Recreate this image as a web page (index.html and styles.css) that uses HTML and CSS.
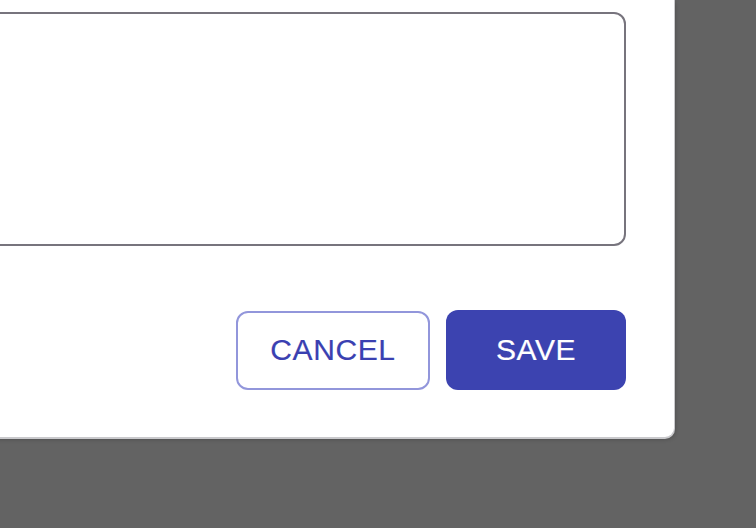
FILE: index.html
```html
<!DOCTYPE html>
<html>
<head>
<meta charset="utf-8">
<link rel="stylesheet" href="styles.css">
</head>
<body>
<div class="dialog">
  <div class="field"></div>
  <div class="actions">
    <button class="btn btn-outline">CANCEL</button>
    <button class="btn btn-filled">SAVE</button>
  </div>
</div>
</body>
</html>
```
FILE: styles.css
```css
html, body {
  margin: 0;
  padding: 0;
  background: #636363;
  width: 756px;
  height: 528px;
  overflow: hidden;
}
.dialog {
  box-sizing: border-box;
  margin-left: -100px;
  width: 774px;
  background: #ffffff;
  border-radius: 0 0 9px 0;
  padding: 12px 48px 47px 0;
  box-shadow: 0 1px 0 1px #c9c9cc, 1px 2px 4px rgba(0,0,0,0.25);
}
.field {
  box-sizing: border-box;
  height: 234px;
  border: 2px solid #77747d;
  border-radius: 12px;
}
.actions {
  display: flex;
  justify-content: flex-end;
  align-items: center;
  gap: 16px;
  margin-top: 64px;
}
.btn {
  box-sizing: border-box;
  font-family: "Liberation Sans", Arial, sans-serif;
  font-size: 30px;
  letter-spacing: 0.6px;
  border-radius: 12px;
  cursor: pointer;
  padding: 0;
  -webkit-text-stroke: 0.2px currentColor;
}
.btn-outline {
  width: 194px;
  height: 79px;
  background: #ffffff;
  color: #3a40b1;
  border: 2px solid #9296db;
}
.btn-filled {
  width: 180px;
  height: 80px;
  background: #3c43b0;
  color: #ffffff;
  border: none;
}
```
